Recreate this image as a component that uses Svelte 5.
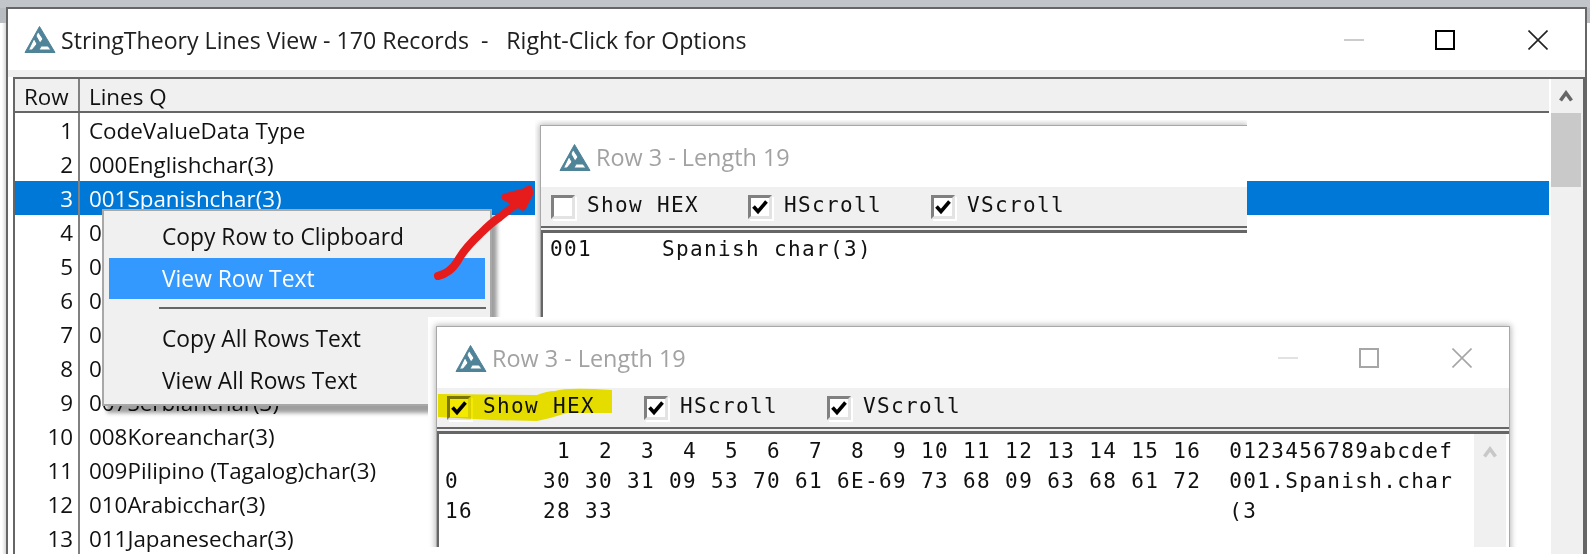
<script>
  const rows = [
    'CodeValueData Type', '000Englishchar(3)', '001Spanishchar(3)', '002Frenchchar(3)',
    '003Germanchar(3)', '004Italianchar(3)', '005Russianchar(3)', '006Polishchar(3)',
    '007Serbianchar(3)', '008Koreanchar(3)', '009Pilipino (Tagalog)char(3)',
    '010Arabicchar(3)', '011Japanesechar(3)'
  ];
  const hex = [
    '        1  2  3  4  5  6  7  8  9 10 11 12 13 14 15 16  0123456789abcdef',
    '0      30 30 31 09 53 70 61 6E-69 73 68 09 63 68 61 72  001.Spanish.char',
    '16     28 33                                            (3'
  ];
</script>

{#snippet logo()}
  <svg class="logo" viewBox="0 0 32 29" aria-hidden="true">
    <path fill-rule="evenodd" fill="#4f8398" stroke="#4f8398" stroke-width="1" stroke-linejoin="round" d="M15.5 1.5 L31 27.5 H1 Z M14 6.5 L19 14 L16 18 L12 11 Z M10 13.5 L13 19 L8 25 L4.5 25 Z M17 21 L24 21 L27 25 L15 25 Z" />
  </svg>
{/snippet}

{#snippet check(label, on)}
  <span class="item">
    <span class="box">
      {#if on}
        <svg viewBox="0 0 18 18" aria-hidden="true"><path d="M2.5 8.5 L7 13.5 L15.5 3.5" fill="none" stroke="#000" stroke-width="3.6" /></svg>
      {/if}
    </span>
    <span class="label">{label}</span>
  </span>
{/snippet}

{#snippet toolbar(first)}
  <div class="toolbar">
    {@render check('Show HEX', first)}
    {@render check('HScroll', true)}
    {@render check('VScroll', true)}
  </div>
  <div class="rules"></div>
{/snippet}

<div class="screen">
  <section class="main">
    <header class="titlebar">
      {@render logo()}
      <span class="title">StringTheory Lines View - 170 Records  -   Right-Click for Options</span>
      <span class="controls">
        <span class="min"></span>
        <span class="max"></span>
        <svg class="close" viewBox="0 0 20 20" aria-hidden="true"><path d="M0.5 0.5 L19.5 19.5 M19.5 0.5 L0.5 19.5" stroke="#222" stroke-width="1.6" /></svg>
      </span>
    </header>
    <div class="strip"></div>
    <div class="table">
      <div class="list">
        <div class="head">
          <span class="num">Row</span>
          <span class="txt">Lines Q</span>
        </div>
        {#each rows as row, i}
          <div class="row" class:sel={i === 2}>
            <span class="num">{i + 1}</span>
            <span class="txt">{row}</span>
          </div>
        {/each}
      </div>
      <div class="scroll">
        <div class="arrow">
          <svg viewBox="0 0 14 12" aria-hidden="true"><path d="M1.5 10.5 L7 3 L12.5 10.5" fill="none" stroke="#666" stroke-width="3.6" /></svg>
        </div>
        <div class="thumb"></div>
      </div>
    </div>
  </section>

  <nav class="menu">
    <div class="mi">Copy Row to Clipboard</div>
    <div class="mi hot">View Row Text</div>
    <div class="sep"></div>
    <div class="mi">Copy All Rows Text</div>
    <div class="mi">View All Rows Text</div>
  </nav>

  <section class="float one">
    <div class="win">
      <div class="wtitle">
        {@render logo()}
        <span class="dim">Row 3 - Length 19</span>
      </div>
      {@render toolbar(false)}
      <pre class="text plain">001     Spanish char(3)</pre>
    </div>
  </section>

  <section class="float two">
    <div class="win">
      <div class="wtitle">
        {@render logo()}
        <span class="dim">Row 3 - Length 19</span>
        <span class="controls dimmed">
          <span class="min"></span>
          <span class="max"></span>
          <svg class="close" viewBox="0 0 20 20" aria-hidden="true"><path d="M0.5 0.5 L19.5 19.5 M19.5 0.5 L0.5 19.5" stroke="#a6a6a6" stroke-width="1.6" /></svg>
        </span>
      </div>
      {@render toolbar(true)}
      <div class="hexwrap">
        <pre class="text">{hex.join('\n')}</pre>
        <div class="vbar">
          <svg viewBox="0 0 14 12" aria-hidden="true"><path d="M1.5 10.5 L7 3 L12.5 10.5" fill="none" stroke="#c8c8c8" stroke-width="3.6" /></svg>
        </div>
      </div>
    </div>
    <svg class="marker" viewBox="0 0 180 36" aria-hidden="true">
      <path d="M1 6 L100 7 Q110 3 118 3 Q130 -1 175 2 L175 25 L130 25 Q115 30 100 33 L55 32 L1 29 Z" fill="#f4ea00" />
    </svg>
  </section>

  <svg class="ink" viewBox="0 0 120 110" aria-hidden="true">
    <path d="M8 101 Q20 98 27 87 Q34 74 50 59 Q62 47 70 42 L95 22" fill="none" stroke="#e61c1c" stroke-width="8" stroke-linecap="round" stroke-linejoin="round" />
    <path d="M75 22 L94 17 L99 14 L100 18 L93 32 Z" fill="#e61c1c" stroke="#e61c1c" stroke-width="7" stroke-linejoin="round" />
  </svg>
</div>

<style>
  :global(body) {
    margin: 0;
    background: #fff;
  }

  .screen {
    position: relative;
    width: 1590px;
    height: 554px;
    overflow: hidden;
    box-sizing: border-box;
    padding: 7px 3px 0 6px;
    background:
      linear-gradient(#c2c5c9, #c2c5c9) 0 0 / 100% 8px no-repeat,
      linear-gradient(#b9bcc0, #b9bcc0) 0 0 / 7px 23px no-repeat,
      linear-gradient(#b9bcc0, #b9bcc0) 100% 0 / 4px 23px no-repeat,
      linear-gradient(90deg, #fff 2px, #d8d8d8 6px) 0 0 / 7px 100% no-repeat,
      #fff;
    font-family: "Open Sans", "Noto Sans", sans-serif;
    color: #111;
  }

  .main {
    height: 600px;
    border: 2px solid #666;
    border-bottom: 0;
    background: #fff;
  }

  .titlebar {
    display: flex;
    align-items: center;
    height: 61px;
    padding-left: 16px;
  }

  .logo {
    flex: none;
    width: 32px;
    height: 29px;
  }

  .title {
    margin-left: 5px;
    font-size: 23.1px;
    white-space: pre;
    color: #202020;
  }

  .controls {
    margin-left: auto;
    display: flex;
    align-items: center;
    padding-right: 37px;
  }

  .min {
    width: 20px;
    height: 2px;
    background: #ccc;
  }

  .max {
    box-sizing: border-box;
    width: 20px;
    height: 20px;
    margin-left: 71px;
    border: 2px solid #000;
  }

  .close {
    width: 20px;
    height: 20px;
    margin-left: 73px;
  }

  .strip {
    height: 7px;
    background: #f0f0f0;
  }

  .table {
    display: grid;
    grid-template-columns: 1fr 34px;
    margin-left: 5px;
    border: 2px solid #666;
    border-bottom: 0;
    height: 520px;
    font-size: 22.4px;
  }

  .head,
  .row {
    display: flex;
    height: 34px;
    box-sizing: border-box;
    background: #fff;
    line-height: 35px;
  }

  .head {
    background: #f0f0f0;
    border-bottom: 2px solid #666;
  }

  .num {
    box-sizing: border-box;
    flex: none;
    width: 65px;
    height: 100%;
    padding-right: 5px;
    text-align: right;
    border-right: 2px solid #808080;
  }

  .head .num {
    padding: 0 0 0 9px;
    text-align: left;
  }

  .txt {
    padding-left: 9px;
    white-space: pre;
  }

  .sel {
    background: #0078d7;
    color: #fff;
  }

  .scroll {
    margin-left: 2px;
    background: #f0f0f0;
  }

  .arrow {
    display: flex;
    height: 34px;
    width: 30px;
    align-items: center;
    justify-content: center;
  }

  .arrow svg {
    width: 14px;
    height: 12px;
  }

  .thumb {
    width: 30px;
    height: 74px;
    background: #c9c9c9;
  }

  .menu {
    position: absolute;
    left: 102px;
    top: 209px;
    box-sizing: border-box;
    width: 390px;
    height: 197px;
    padding: 5px 5px 0;
    border: 2px solid #a8a8a8;
    background: #f0f0f0;
    box-shadow: 5px 7px 4px rgba(0, 0, 0, .38);
    font-size: 22.8px;
  }

  .mi {
    height: 41.5px;
    line-height: 41px;
    padding-left: 53px;
  }

  .hot {
    background: #3399ff;
    color: #fff;
  }

  .sep {
    height: 2px;
    margin: 8px -1px 9px 50px;
    background: #666;
  }

  .float {
    position: absolute;
    box-sizing: border-box;
    overflow: hidden;
    background: #fff;
  }

  .one {
    left: 535px;
    top: 120px;
    width: 712px;
    height: 197px;
    padding: 5px 0 0 5px;
  }

  .two {
    left: 428px;
    top: 317px;
    width: 1090px;
    height: 230px;
    padding: 9px 8px 0 8px;
  }

  .win {
    height: 400px;
    background: #fff;
    border: 1px solid #a8a8a8;
    box-shadow: 0 0 6px 1px rgba(0, 0, 0, .28);
  }

  .one .win {
    border-right: 0;
  }

  .wtitle {
    display: flex;
    align-items: center;
    height: 61px;
    padding-left: 18px;
  }

  .wtitle .logo {
    margin-top: 2px;
  }

  .dim {
    margin-left: 5px;
    font-size: 23.4px;
    color: #a2a2a2;
    white-space: pre;
  }

  .controls.dimmed {
    padding-right: 37px;
  }

  .dimmed .min {
    background: #e2e2e2;
  }

  .dimmed .max {
    margin-left: 61px;
    border-color: #a6a6a6;
  }

  .dimmed .close {
    margin-left: 73px;
  }

  .toolbar {
    display: flex;
    align-items: center;
    gap: 49px;
    height: 39px;
    padding-left: 10px;
    background: #f0f0f0;
  }

  .item {
    display: flex;
    align-items: center;
    gap: 12px;
  }

  .box {
    box-sizing: border-box;
    display: flex;
    align-items: center;
    justify-content: center;
    width: 24px;
    height: 24px;
    background: #fff;
    border: 3px solid;
    border-color: #808080 #e3e3e3 #e3e3e3 #808080;
    box-shadow: 2px 2px 0 #fff;
  }

  .box svg {
    width: 18px;
    height: 18px;
  }

  .label,
  .text {
    font-family: "DejaVu Sans Mono", "Liberation Mono", monospace;
    font-size: 21px;
    letter-spacing: 1.36px;
    color: #111;
  }

  .label {
    padding-bottom: 3px;
  }

  .rules {
    box-sizing: border-box;
    height: 7px;
    background: #f0f0f0;
    border-top: 2px solid #666;
    border-bottom: 3px solid #666;
  }

  .text {
    flex: 1;
    margin: 0;
    padding: 2px 0 0 6px;
    line-height: 30px;
    white-space: pre;
    border-left: 2px solid #666;
    height: 300px;
  }

  .text.plain {
    padding: 1px 0 0 7px;
  }

  .hexwrap {
    display: flex;
    padding-right: 3px;
  }

  .vbar {
    flex: none;
    width: 32px;
    height: 300px;
    background: #f0f0f0;
    display: flex;
    justify-content: center;
    padding-top: 12px;
    box-sizing: border-box;
  }

  .vbar svg {
    width: 14px;
    height: 12px;
  }

  .marker {
    position: absolute;
    left: 9px;
    top: 71px;
    width: 180px;
    height: 36px;
    mix-blend-mode: multiply;
  }

  .ink {
    position: absolute;
    left: 430px;
    top: 175px;
    width: 120px;
    height: 110px;
  }
</style>
